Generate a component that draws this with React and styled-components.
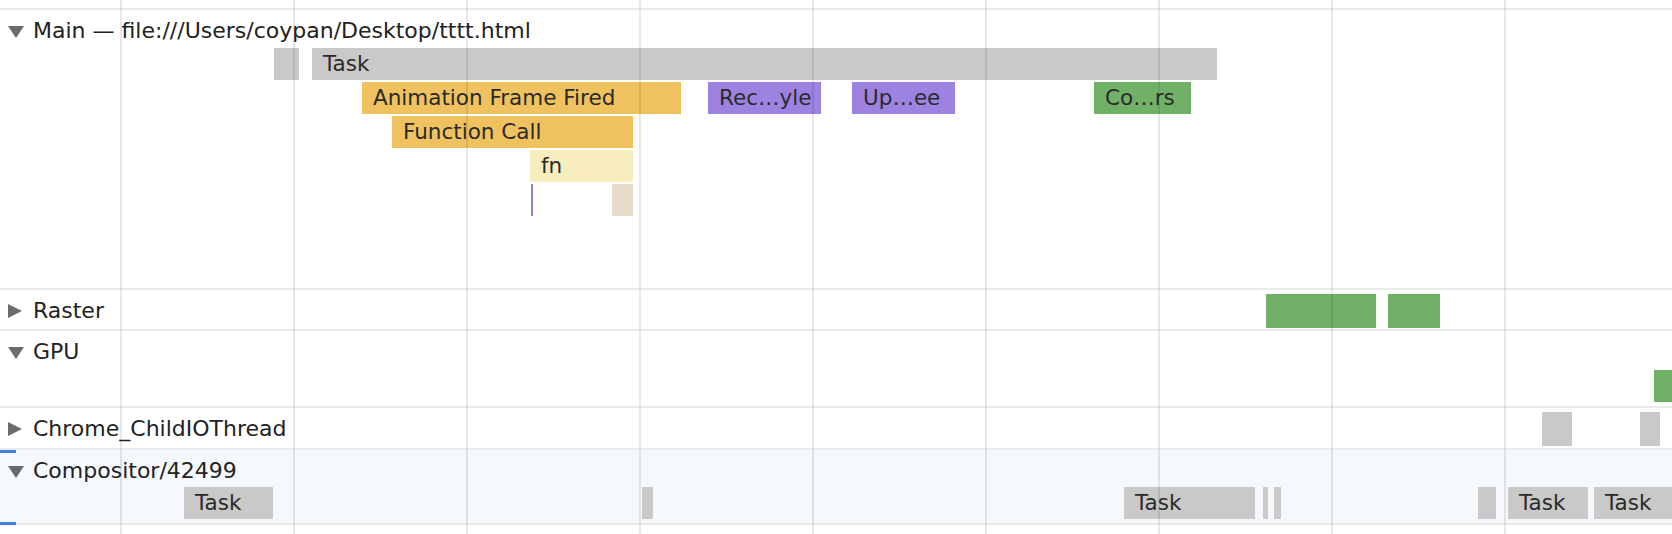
import React from "react"
import styled, { createGlobalStyle } from "styled-components"

const GlobalStyle = createGlobalStyle`
  html, body {
    margin: 0;
    padding: 0;
    background: #ffffff;
  }
  body {
    font-family: "DejaVu Sans", "Liberation Sans", sans-serif;
    overflow: hidden;
  }
`

const COLORS = {
  task: "#c9c9c9",
  scripting: "#f0c25f",
  fn: "#f7edbf",
  rendering: "#9d83e1",
  painting: "#71b167",
  other: "#e9dbcb",
  mark: "#8c7fd4",
}

// Chrome devtools-like flame chart panel
const Page = styled.div`
  position: relative;
  width: 1672px;
  height: 534px;
  overflow: hidden;
  background: #ffffff;
`

const TopStrip = styled.div`
  height: 8px;
  border-bottom: 2px solid #ebebeb;
`

// header and lane share one grid cell, so collapsed tracks draw bars on the header line
const Track = styled.div`
  position: relative;
  display: grid;
  grid-template: 1fr / 1fr;
  height: ${(p) => p.$height}px;
  border-bottom: 2px solid #ebebeb;
  background: ${(p) => (p.$selected ? "#f5f8fc" : "transparent")};

  & > * {
    grid-area: 1 / 1;
  }
`

const Header = styled.div`
  box-sizing: border-box;
  display: flex;
  align-items: center;
  gap: 9px;
  height: 40px;
  padding: 1px 0 0 8px;
  font-size: 22px;
  color: #222222;
  white-space: nowrap;
`

const Arrow = styled.span`
  display: inline-block;
  width: 0;
  height: 0;
  ${(p) =>
    p.$open
      ? `
    border-left: 8px solid transparent;
    border-right: 8px solid transparent;
    border-top: 12px solid #6b6b6b;
    margin-top: 2px;
  `
      : `
    border-top: 7px solid transparent;
    border-bottom: 7px solid transparent;
    border-left: 14px solid #6b6b6b;
    margin-right: 2px;
  `}
`

const Lane = styled.div`
  display: flex;
  flex-direction: column;
  gap: 2px;
  padding-top: ${(p) => p.$offset}px;
`

const Row = styled.div`
  position: relative;
  height: ${(p) => p.$h}px;
`

const Bar = styled.div`
  position: absolute;
  top: 0;
  bottom: 0;
  box-sizing: border-box;
  padding-left: ${(p) => (p.$labeled ? 11 : 0)}px;
  background: ${(p) => p.$color};
  color: #2a2a2a;
  font-size: 21.5px;
  line-height: ${(p) => p.$h}px;
  white-space: nowrap;
  overflow: hidden;
`

const GridOverlay = styled.div`
  position: absolute;
  inset: 0;
  pointer-events: none;
  background-image: linear-gradient(
    to right,
    rgba(0, 0, 0, 0.09) 0,
    rgba(0, 0, 0, 0.09) 2px,
    transparent 2px
  );
  background-size: 173px 100%;
  background-position: 120px 0;
`

const SelectMark = styled.div`
  position: absolute;
  left: 0;
  width: 16px;
  height: 3px;
  background: #3f7fdf;
  ${(p) => (p.$bottom ? "bottom: -2px;" : "top: 0;")}
`

const mainRows = [
  [
    { x: 274, w: 25 },
    { x: 312, w: 905, label: "Task" },
  ],
  [
    { x: 362, w: 319, c: "scripting", label: "Animation Frame Fired" },
    { x: 708, w: 113, c: "rendering", label: "Rec…yle" },
    { x: 852, w: 103, c: "rendering", label: "Up…ee" },
    { x: 1094, w: 97, c: "painting", label: "Co…rs" },
  ],
  [{ x: 392, w: 241, c: "scripting", label: "Function Call" }],
  [{ x: 530, w: 103, c: "fn", label: "fn" }],
  [
    { x: 531, w: 2, c: "mark" },
    { x: 612, w: 21, c: "other" },
  ],
]

const compositorRow = [
  { x: 184, w: 89, label: "Task" },
  { x: 642, w: 11 },
  { x: 1124, w: 131, label: "Task" },
  { x: 1263, w: 5 },
  { x: 1274, w: 7 },
  { x: 1478, w: 18 },
  { x: 1508, w: 80, label: "Task" },
  { x: 1594, w: 78, label: "Task" },
]

const Flame = ({ rows, offset, h = 32 }) => (
  <Lane $offset={offset}>
    {rows.map((bars, r) => (
      <Row key={r} $h={h}>
        {bars.map((b, i) => (
          <Bar
            key={i}
            $color={COLORS[b.c || "task"]}
            $h={h}
            $labeled={!!b.label}
            style={{ left: b.x, width: b.w }}
          >
            {b.label}
          </Bar>
        ))}
      </Row>
    ))}
  </Lane>
)

const TrackHeader = ({ open, children }) => (
  <Header>
    <Arrow $open={open} />
    {children}
  </Header>
)

const App = () => {
  return (
    <Page>
      <GlobalStyle />
      <TopStrip />

      <Track $height={278}>
        <TrackHeader open>Main — file:///Users/coypan/Desktop/tttt.html</TrackHeader>
        <Flame rows={mainRows} offset={38} />
      </Track>

      <Track $height={39}>
        <TrackHeader>Raster</TrackHeader>
        <Flame
          offset={4}
          h={34}
          rows={[
            [
              { x: 1266, w: 110, c: "painting" },
              { x: 1388, w: 52, c: "painting" },
            ],
          ]}
        />
      </Track>

      <Track $height={75}>
        <TrackHeader open>GPU</TrackHeader>
        <Flame offset={39} rows={[[{ x: 1654, w: 18, c: "painting" }]]} />
      </Track>

      <Track $height={40}>
        <TrackHeader>Chrome_ChildIOThread</TrackHeader>
        <Flame
          offset={4}
          h={34}
          rows={[
            [
              { x: 1542, w: 30 },
              { x: 1640, w: 20 },
            ],
          ]}
        />
      </Track>

      <Track $height={73} $selected>
        <TrackHeader open>Compositor/42499</TrackHeader>
        <Flame offset={37} rows={[compositorRow]} />
        <SelectMark />
        <SelectMark $bottom />
      </Track>

      <GridOverlay />
    </Page>
  )
}

export default App
